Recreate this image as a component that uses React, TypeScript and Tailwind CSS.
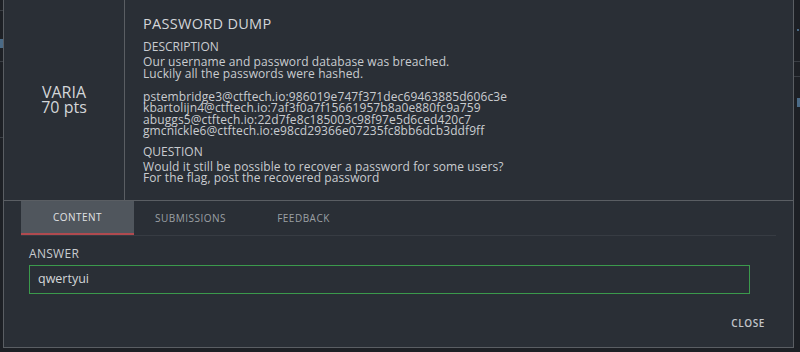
import React from 'react'

const font = { fontFamily: '"Open Sans", "Noto Sans", sans-serif' }

const hashes = [
  'pstembridge3@ctftech.io:986019e747f371dec69463885d606c3e',
  'kbartolijn4@ctftech.io:7af3f0a7f15661957b8a0e880fc9a759',
  'abuggs5@ctftech.io:22d7fe8c185003c98f97e5d6ced420c7',
  'gmcnickle6@ctftech.io:e98cd29366e07235fc8bb6dcb3ddf9ff',
]

const tabs = ['CONTENT', 'SUBMISSIONS', 'FEEDBACK']

export default function App() {
  return (
    <div className="w-[800px] h-[352px] flex bg-[#1d2025] overflow-hidden" style={font}>
      <PageEdge />
      <div className="w-[791px] h-[348px] flex flex-col bg-[#2a2f36] border-l border-r border-b border-[#5a5e63]">
        <div className="h-[201px] flex border-b border-[#5a5e63] shrink-0">
          <div className="w-[121px] border-r border-[#5a5e63] flex flex-col items-center justify-center text-[16px] leading-[15px] text-[#d3d6d9]">
            <span>VARIA</span>
            <span>70 pts</span>
          </div>
          <div className="flex-1 pl-[18px] pt-[15px] text-[#c9ccd0]">
            <h1 className="text-[14.5px] leading-[18px] tracking-[0.3px] text-[#d3d6d9]">PASSWORD DUMP</h1>
            <h2 className="mt-[7px] mb-[2px] text-[12px] leading-[14px]">DESCRIPTION</h2>
            <div className="text-[12px] leading-[11.5px] tracking-[0.1px]">
              <p>Our username and password database was breached.</p>
              <p>Luckily all the passwords were hashed.</p>
              <p className="mt-[11.5px]">
                {hashes.map((h) => (
                  <span key={h} className="block">{h}</span>
                ))}
              </p>
            </div>
            <h2 className="mt-[8px] mb-[2px] text-[12px] leading-[14px]">QUESTION</h2>
            <div className="text-[12px] leading-[11.5px] tracking-[0.1px]">
              <p>Would it still be possible to recover a password for some users?</p>
              <p>For the flag, post the recovered password</p>
            </div>
          </div>
        </div>

        <div className="ml-[17px] w-[755px] flex border-b border-[#373c43] shrink-0">
          {tabs.map((t, i) => (
            <div
              key={t}
              className={
                i === 0
                  ? 'w-[113px] h-[34px] flex items-center justify-center text-[10px] tracking-[0.5px] text-[#e0e2e4] bg-[#50565d] border-b-2 border-[#b04a4f]'
                  : 'w-[113px] h-[34px] flex items-center justify-center text-[10px] tracking-[0.5px] text-[#9ca0a5]'
              }
            >
              {t}
            </div>
          ))}
        </div>

        <div className="pl-[25px] pt-[10px]">
          <label className="block text-[12px] leading-[16px] text-[#c9ccd0] tracking-[0.3px]">ANSWER</label>
          <div className="mt-[3px] w-[721px] h-[29px] border border-[#3b9a4c] flex items-center pl-[8px] text-[12.5px] text-[#d3d6d9]">
            qwertyui
          </div>
        </div>

        <div className="flex-1 flex items-end justify-end pr-[28px] pb-[16px]">
          <button className="text-[10px] font-semibold tracking-[0.6px] text-[#c3c6ca]">CLOSE</button>
        </div>
      </div>
      <RightEdge />
    </div>
  )
}

function PageEdge() {
  return (
    <div className="w-[3px] flex flex-col">
      <div className="h-[10px]" />
      <div className="h-px bg-[#3a3e44]" />
      <div className="h-[28px]" />
      <div className="h-[9px] bg-[#4a6a86]" />
      <div className="h-[13px]" />
      <div className="h-px bg-[#3a3e44]" />
      <div className="h-[75px]" />
      <div className="h-px bg-[#3a3e44]" />
    </div>
  )
}

function RightEdge() {
  return (
    <div className="w-[6px] flex flex-col">
      <div className="h-[29px]" />
      <div className="h-[2px] w-[2px] ml-[3px] bg-[#4a6a86]" />
      <div className="h-[30px]" />
      <div className="h-px bg-[#3a3e44]" />
      <div className="h-[14px]" />
      <div className="h-px bg-[#3a3e44]" />
      <div className="h-[21px]" />
      <div className="h-[9px] w-[3px] ml-[3px] bg-[#4a6a86]" />
    </div>
  )
}
